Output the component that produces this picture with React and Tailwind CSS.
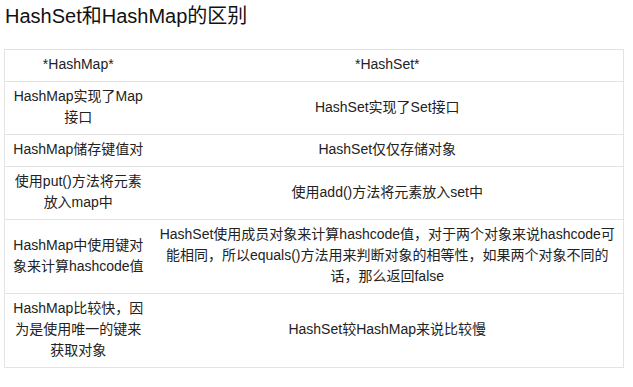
const rows = [
  { left: ["*HashMap*"], right: ["*HashSet*"] },
  { left: ["HashMap实现了Map", "接口"], right: ["HashSet实现了Set接口"] },
  { left: ["HashMap储存键值对"], right: ["HashSet仅仅存储对象"] },
  { left: ["使用put()方法将元素", "放入map中"], right: ["使用add()方法将元素放入set中"] },
  {
    left: ["HashMap中使用键对", "象来计算hashcode值"],
    right: [
      "HashSet使用成员对象来计算hashcode值，对于两个对象来说hashcode可",
      "能相同，所以equals()方法用来判断对象的相等性，如果两个对象不同的",
      "话，那么返回false",
    ],
  },
  {
    left: ["HashMap比较快，因", "为是使用唯一的键来", "获取对象"],
    right: ["HashSet较HashMap来说比较慢"],
  },
];

const Lines = ({ lines }) =>
  lines.map((line, i) => (
    <span key={i} className="block whitespace-nowrap">
      {line}
    </span>
  ));

export default function App() {
  return (
    <div
      className="w-[633px] h-[387px] bg-white pl-[4px] text-[#222]"
      style={{ fontFamily: '"Liberation Sans", "Noto Sans CJK SC", sans-serif' }}
    >
      <h1 className="pl-[1px] pt-[2px] text-[20px] leading-[28px] text-[#111]">
        HashSet和HashMap的区别
      </h1>

      <table className="mt-[19px] w-[620px] table-fixed border-collapse border border-[#e3e3e3] text-[14px] leading-[21px]">
        <colgroup>
          <col className="w-[147px]" />
          <col />
        </colgroup>
        <tbody>
          {rows.map((row, i) => (
            <tr key={i} className="border-t border-[#e3e3e3]">
              <td className="px-[6px] pt-[4px] pb-[6px] text-center align-middle">
                <Lines lines={row.left} />
              </td>
              <td className="px-[6px] pt-[4px] pb-[6px] text-center align-middle">
                <Lines lines={row.right} />
              </td>
            </tr>
          ))}
        </tbody>
      </table>
    </div>
  );
}
